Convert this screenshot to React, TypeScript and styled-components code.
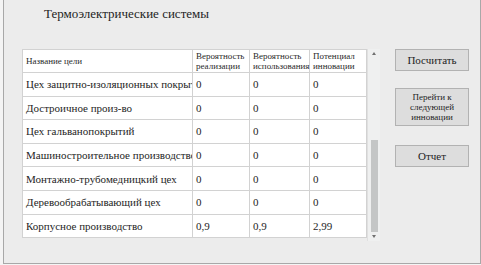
import React from 'react';
import styled, { createGlobalStyle } from 'styled-components';

const serif = 'Tinos, "Liberation Serif", "Times New Roman", serif';

const GlobalStyle = createGlobalStyle`
  html, body {
    margin: 0;
    padding: 0;
    background: #f4f4f4;
  }
`;

const Window = styled.div`
  box-sizing: border-box;
  margin-left: 3px;
  width: 478px;
  height: 264px;
  background: #ececec;
  border-left: 1px solid #a8a8a8;
  border-right: 1px solid #a8a8a8;
  border-bottom: 1px solid #a8a8a8;
  display: flex;
  flex-direction: column;
  font-family: ${serif};
  color: #1e1e1e;
`;

const Title = styled.div`
  padding: 6px 0 0 40px;
  font-size: 13px;
  height: 22px;
`;

const Content = styled.div`
  display: flex;
  margin-top: 21px;
`;

const TableFrame = styled.div`
  display: flex;
  margin-left: 18px;
  height: 192px;
`;

const Grid = styled.table`
  border-collapse: collapse;
  table-layout: fixed;
  width: 345px;
  background: #fff;
  align-self: flex-start;
  border: 1px solid #d2d2d2;
  font-family: inherit;
`;

const HeadCell = styled.th`
  font-weight: normal;
  text-align: left;
  vertical-align: middle;
  font-family: inherit;
  font-size: 9px;
  line-height: 10px;
  color: #2a2a2a;
  height: 23px;
  padding: 0 3px;
  border: 1px solid #d2d2d2;
  box-sizing: border-box;
`;

const Cell = styled.td`
  font-family: inherit;
  font-size: 11px;
  height: 23.6px;
  padding: 0 3px;
  border: 1px solid #d2d2d2;
  white-space: nowrap;
  overflow: hidden;
  box-sizing: border-box;
`;

const ScrollTrack = styled.div`
  width: 12px;
  height: 192px;
  background: #eff0f0;
  border-left: 1px solid #e0e0e0;
  display: flex;
  flex-direction: column;
  align-items: center;
`;

const Arrow = styled.div<{ $down?: boolean }>`
  width: 0;
  height: 0;
  margin: 3px 0;
  border-left: 2.5px solid transparent;
  border-right: 2.5px solid transparent;
  ${({ $down }) => ($down ? 'border-top: 3px solid #707070;' : 'border-bottom: 3px solid #707070;')}
`;

const Thumb = styled.div`
  width: 7px;
  height: 92px;
  background: #c4c6c6;
  margin-top: auto;
`;

const Buttons = styled.div`
  display: flex;
  flex-direction: column;
  margin-left: 15px;
`;

const Button = styled.button<{ $tall?: boolean; $gap: number }>`
  box-sizing: border-box;
  width: 74px;
  height: ${({ $tall }) => ($tall ? '38px' : '22px')};
  margin-top: ${({ $gap }) => $gap}px;
  background: #dddddd;
  border: 1px solid #b2b2b2;
  font-family: inherit;
  font-size: ${({ $tall }) => ($tall ? '9px' : '11px')};
  line-height: ${({ $tall }) => ($tall ? '10px' : '14px')};
  color: #1e1e1e;
  padding: 0 4px;
`;

const rows = [
  ['Цех защитно-изоляционных покрытий', '0', '0', '0'],
  ['Достроичное произ-во', '0', '0', '0'],
  ['Цех гальванопокрытий', '0', '0', '0'],
  ['Машиностроительное производство', '0', '0', '0'],
  ['Монтажно-трубомедницкий цех', '0', '0', '0'],
  ['Деревообрабатывающий цех', '0', '0', '0'],
  ['Корпусное производство', '0,9', '0,9', '2,99'],
];

export default function App() {
  return (
    <>
      <GlobalStyle />
      <Window>
        <Title>Термоэлектрические системы</Title>
        <Content>
          <TableFrame>
            <Grid>
              <colgroup>
                <col style={{ width: 170 }} />
                <col style={{ width: 57 }} />
                <col style={{ width: 60 }} />
                <col style={{ width: 57 }} />
              </colgroup>
              <thead>
                <tr>
                  <HeadCell>Название цели</HeadCell>
                  <HeadCell>Вероятность реализации</HeadCell>
                  <HeadCell>Вероятность использования</HeadCell>
                  <HeadCell>Потенциал инновации</HeadCell>
                </tr>
              </thead>
              <tbody>
                {rows.map((r) => (
                  <tr key={r[0]}>
                    {r.map((c, i) => (
                      <Cell key={i}>{c}</Cell>
                    ))}
                  </tr>
                ))}
              </tbody>
            </Grid>
            <ScrollTrack>
              <Arrow />
              <Thumb />
              <Arrow $down />
            </ScrollTrack>
          </TableFrame>
          <Buttons>
            <Button $gap={0}>Посчитать</Button>
            <Button $tall $gap={17}>
              Перейти к следующей инновации
            </Button>
            <Button $gap={19}>Отчет</Button>
          </Buttons>
        </Content>
      </Window>
    </>
  );
}
